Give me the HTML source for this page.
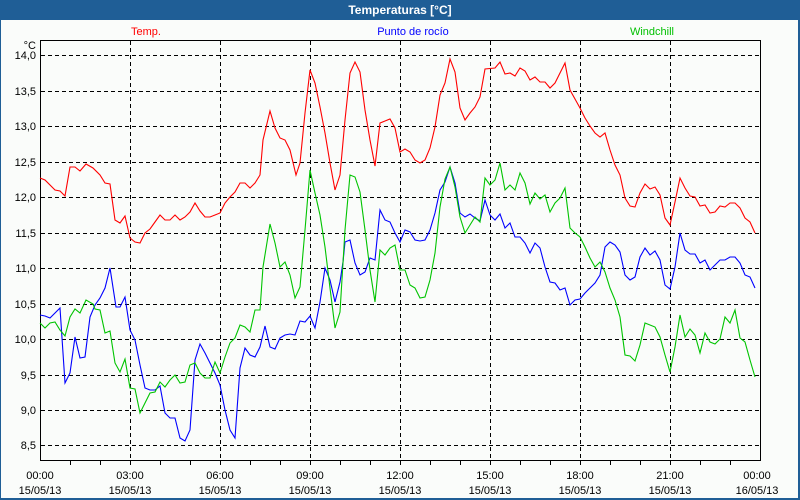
<!DOCTYPE html>
<html><head><meta charset="utf-8"><style>
html,body{margin:0;padding:0;width:800px;height:500px;overflow:hidden;background:#1f5e96}
svg{display:block}
text{font-family:"Liberation Sans",Arial,sans-serif;font-size:11px}
</style></head><body>
<svg width="800" height="500" viewBox="0 0 800 500">
<rect x="0" y="0" width="800" height="500" fill="#1f5e96"/>
<rect x="1" y="20" width="797" height="478" fill="#fafcfa"/>
<text x="400" y="14" text-anchor="middle" fill="#fff" font-weight="bold" style="font-size:12px">Temperaturas [°C]</text>
<text x="146" y="35" text-anchor="middle" fill="#ff0000">Temp.</text>
<text x="413" y="35" text-anchor="middle" fill="#0000ff">Punto de rocío</text>
<text x="652" y="35" text-anchor="middle" fill="#00c000">Windchill</text>
<text x="36" y="49" text-anchor="end" fill="#000">°C</text>
<g fill="#000" text-anchor="end">
<text x="36" y="59">14,0</text><text x="36" y="95">13,5</text><text x="36" y="130">13,0</text><text x="36" y="166">12,5</text>
<text x="36" y="201">12,0</text><text x="36" y="237">11,5</text><text x="36" y="272">11,0</text><text x="36" y="308">10,5</text>
<text x="36" y="343">10,0</text><text x="36" y="379">9,5</text><text x="36" y="414">9,0</text><text x="36" y="449">8,5</text>
</g>
<g stroke="#000" stroke-width="1" stroke-dasharray="4,3" shape-rendering="crispEdges">
<path d="M41 55.5H760M41 91.5H760M41 126.5H760M41 162.5H760M41 197.5H760M41 233.5H760M41 268.5H760M41 304.5H760M41 339.5H760M41 375.5H760M41 410.5H760M41 445.5H760"/>
<path d="M130.5 41V461M220.5 41V461M310.5 41V461M400.5 41V461M490.5 41V461M580.5 41V461M670.5 41V461"/>
</g>
<rect x="40.5" y="40.5" width="720" height="420" fill="none" stroke="#000" shape-rendering="crispEdges"/>
<path stroke="#000" shape-rendering="crispEdges" d="M70.5 461v4M100.5 461v4M130.5 461v4M160.5 461v4M190.5 461v4M220.5 461v4M250.5 461v4M280.5 461v4M310.5 461v4M340.5 461v4M370.5 461v4M400.5 461v4M430.5 461v4M460.5 461v4M490.5 461v4M520.5 461v4M550.5 461v4M580.5 461v4M610.5 461v4M640.5 461v4M670.5 461v4M700.5 461v4M730.5 461v4"/>
<g fill="#000" text-anchor="middle">
<text x="40" y="479">00:00</text><text x="40" y="494">15/05/13</text>
<text x="130" y="479">03:00</text><text x="130" y="494">15/05/13</text>
<text x="220" y="479">06:00</text><text x="220" y="494">15/05/13</text>
<text x="310" y="479">09:00</text><text x="310" y="494">15/05/13</text>
<text x="400" y="479">12:00</text><text x="400" y="494">15/05/13</text>
<text x="490" y="479">15:00</text><text x="490" y="494">15/05/13</text>
<text x="580" y="479">18:00</text><text x="580" y="494">15/05/13</text>
<text x="670" y="479">21:00</text><text x="670" y="494">15/05/13</text>
<text x="757" y="479">00:00</text><text x="757" y="494">16/05/13</text>
</g>
<g fill="none" stroke-width="1.1">
<polyline stroke="#ff0000" points="40,178 45,180 55,190 60,191 65,196 70,167 75,167 80,171 86,164 93,168 100,175 105,183 110,184 115,220 120,223 125,216 130,238 135,242 140,243 145,233 150,229 155,222 160,215 165,220 170,220 175,215 180,220 185,217 190,212 195,203 200,211 205,217 210,217 215,215 220,213 225,203 230,197 235,192 240,183 245,183 250,188 255,183 260,175 263,140 270,111 275,128 280,138 285,140 290,150 296,175 300,163 305,113 310,70 315,83 320,107 325,133 330,163 335,190 340,175 345,120 350,73 355,62 360,72 365,110 370,140 375,166 380,123 385,121 390,119 395,128 400,152 405,149 410,152 415,160 420,163 425,160 430,148 435,127 440,95 445,83 450,59 455,72 460,108 465,120 470,113 475,107 480,97 485,69 495,68 500,62 505,74 510,73 515,76 520,68 525,71 530,80 535,77 540,82 545,82 550,88 555,83 560,73 565,63 570,90 575,99 580,108 585,118 590,126 595,133 600,137 605,133 610,150 615,165 620,175 625,198 630,206 635,207 640,193 645,184 650,189 655,187 660,195 665,218 670,225 675,202 680,178 685,188 690,196 695,197 700,206 705,205 710,213 715,212 720,206 725,207 730,203 735,203 740,208 745,218 750,222 755,233"/>
<polyline stroke="#0000ff" points="40,315 45,316 50,318 60,308 65,383 70,373 75,337 80,358 85,357 90,317 95,305 100,298 105,288 110,268 116,307 120,307 125,297 130,330 135,340 140,365 145,388 150,390 155,390 160,386 165,413 170,418 175,418 180,438 185,441 190,430 195,360 200,344 205,353 210,363 215,373 220,385 225,410 230,430 235,438 240,368 245,348 250,355 255,357 260,347 265,326 270,347 275,349 280,338 285,335 290,334 295,335 300,321 305,322 310,316 315,328 320,302 325,268 330,280 335,302 340,282 343,262 345,242 350,240 355,263 360,275 365,272 370,258 375,260 380,210 385,220 390,222 395,233 400,242 405,230 410,232 415,240 420,241 425,240 430,230 435,213 440,190 445,182 450,167 455,183 460,213 465,217 470,214 475,218 480,221 485,200 490,215 495,220 500,214 505,228 510,223 515,237 520,237 525,243 530,253 535,243 540,248 545,267 550,282 555,283 560,290 565,288 570,305 575,300 580,299 585,293 590,288 595,283 600,275 605,247 610,242 615,245 620,252 625,275 630,280 635,277 640,257 645,248 650,255 655,251 660,260 665,285 670,289 675,267 680,233 685,250 690,254 695,254 700,263 705,260 710,270 715,265 720,260 725,260 730,257 735,257 740,263 745,275 750,277 755,288"/>
<polyline stroke="#00c400" points="40,323 45,328 50,323 55,322 60,330 65,336 70,317 75,309 80,313 86,300 93,304 95,309 100,310 105,333 110,331 115,363 120,372 125,359 130,388 135,389 140,413 145,403 150,393 155,392 160,382 165,387 170,380 175,375 180,383 185,382 190,365 195,363 200,373 205,378 210,378 215,362 220,373 225,357 230,343 235,338 240,325 245,327 250,332 255,310 260,310 263,267 270,224 275,243 280,267 285,262 290,275 295,298 300,287 305,230 310,170 315,193 320,215 325,247 330,288 335,328 340,312 345,230 350,175 355,177 360,192 365,230 370,270 375,302 380,250 385,255 390,248 395,245 400,270 405,270 410,285 415,288 420,298 425,297 430,280 435,253 440,207 445,179 450,167 455,187 460,217 465,233 470,225 475,217 480,222 485,178 490,185 495,180 500,163 505,190 510,185 515,190 520,173 525,183 530,204 535,193 540,199 545,195 550,212 555,203 560,198 565,188 570,228 575,233 580,237 585,247 590,258 595,267 600,262 605,272 610,288 615,300 620,317 625,355 630,356 635,361 640,345 645,323 650,325 655,327 660,337 665,355 670,372 675,347 680,315 685,337 690,329 695,335 700,353 705,333 710,342 715,344 720,339 725,317 730,323 735,310 740,338 745,342 750,360 755,377"/>
</g>
</svg>
</body></html>
